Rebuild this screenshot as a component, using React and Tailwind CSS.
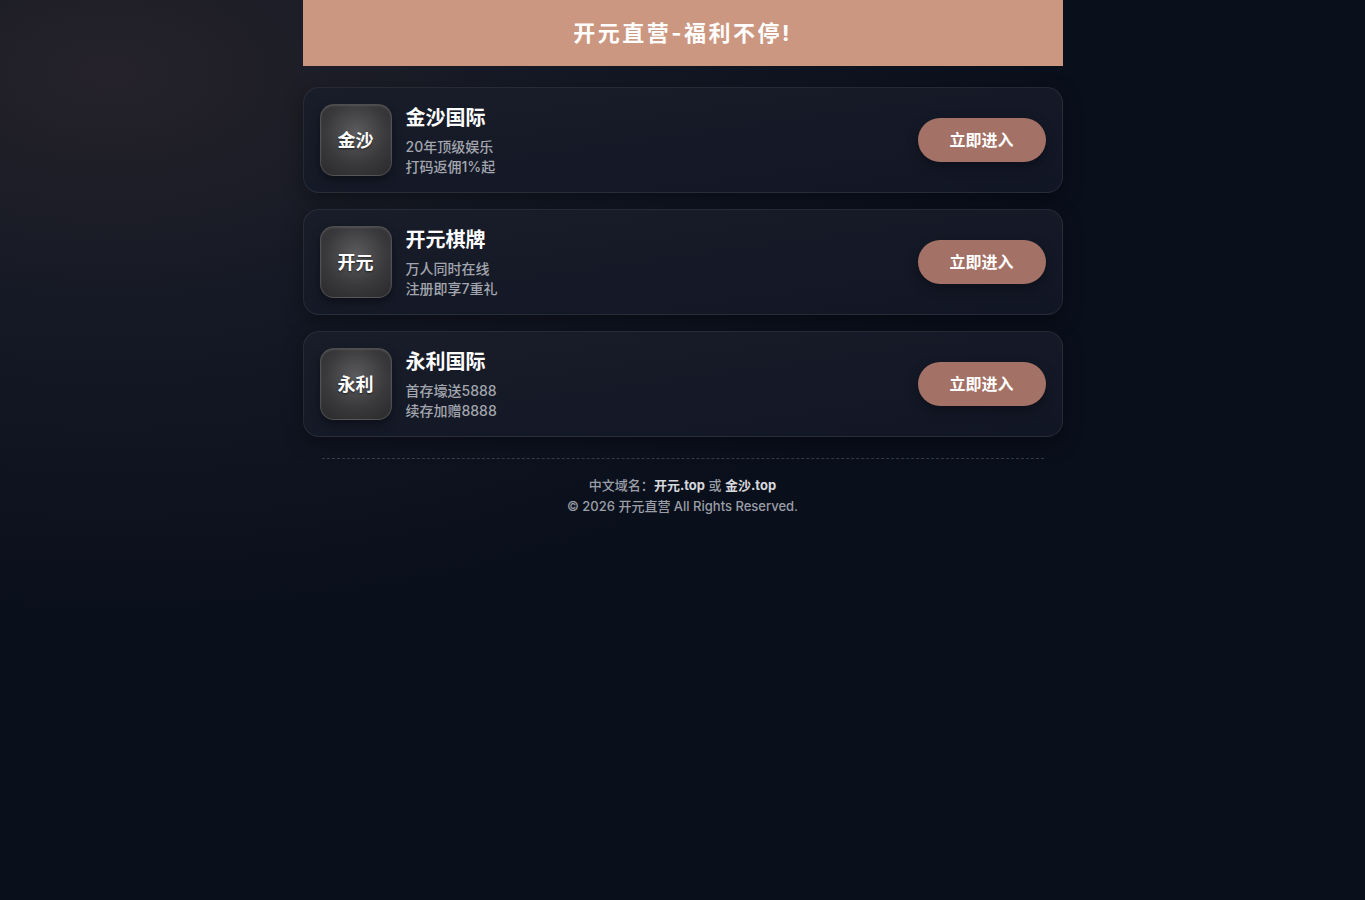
import React from "react";

const sites = [
  { icon: "金沙", name: "金沙国际", lines: ["20年顶级娱乐", "打码返佣1%起"] },
  { icon: "开元", name: "开元棋牌", lines: ["万人同时在线", "注册即享7重礼"] },
  { icon: "永利", name: "永利国际", lines: ["首存壕送5888", "续存加赠8888"] },
];

const SiteCard = ({ site }) => (
  <div className="flex h-[106px] items-center justify-between rounded-2xl border border-white/[0.08] bg-gradient-to-br from-[#191d29] to-[#111625] px-4 shadow-[0_6px_20px_rgba(0,0,0,0.35)]">
    <div className="flex items-center gap-[14px]">
      <div className="flex h-[72px] w-[72px] items-center justify-center rounded-[14px] border border-white/[0.14] bg-[radial-gradient(circle_at_50%_40%,#5c5c5e_0%,#3a3a3c_55%,#29292b_100%)] shadow-[inset_0_1px_2px_rgba(255,255,255,0.12),0_4px_10px_rgba(0,0,0,0.4)]">
        <span className="text-[18px] font-bold text-white [text-shadow:0_1px_2px_rgba(0,0,0,0.6)]">{site.icon}</span>
      </div>
      <div className="flex flex-col pt-[1px]">
        <div className="mb-[6px] text-[20px] font-bold leading-[26px] text-white">{site.name}</div>
        {site.lines.map((l) => (
          <div key={l} className="text-[14px] font-medium leading-[20px] text-[#a3a6ae]">{l}</div>
        ))}
      </div>
    </div>
    <button className="h-[44px] w-[128px] rounded-full bg-[#a47166] text-[16px] font-bold text-white shadow-[0_4px_12px_rgba(0,0,0,0.35)]">
      立即进入
    </button>
  </div>
);

export default function App() {
  return (
    <div
      className="min-h-[900px] w-full bg-[#0a0f1c] bg-[radial-gradient(ellipse_70%_60%_at_8%_8%,#25222a_0%,#151925_45%,#0a0f1c_100%)]"
      style={{ fontFamily: '"Inter", "Noto Sans CJK SC", sans-serif' }}
    >
      <div className="mx-auto w-[760px]">
        <div className="flex h-[66px] items-center justify-center bg-[#cb9781]">
          <h1 className="text-[22px] font-bold tracking-[2.5px] text-white">开元直营-福利不停!</h1>
        </div>
        <div className="mt-[21px] flex flex-col gap-4">
          {sites.map((s) => (
            <SiteCard key={s.name} site={s} />
          ))}
        </div>
        <div className="mx-[19px] mt-[21px] border-t border-dashed border-white/[0.18]" />
        <div className="mt-[16px] text-center text-[13px] font-medium leading-[21px] text-[#9a9ea6]">
          <div>
            中文域名：<b className="font-bold text-[#d6d8dc]">开元.top</b> 或{" "}
            <b className="font-bold text-[#d6d8dc]">金沙.top</b>
          </div>
          <div>© 2026 开元直营 All Rights Reserved.</div>
        </div>
      </div>
    </div>
  );
}
